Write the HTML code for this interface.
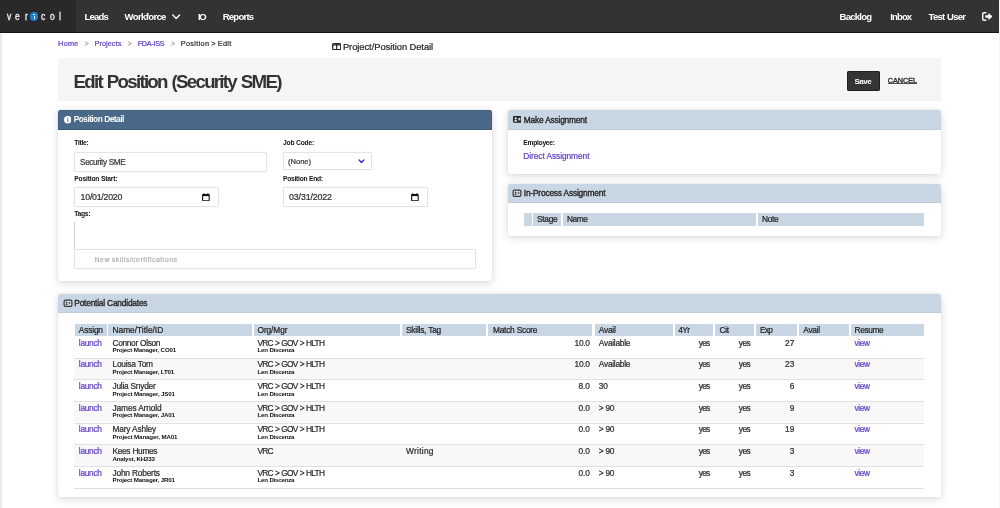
<!DOCTYPE html>
<html lang="en">
<head>
<meta charset="utf-8">
<title>Edit Position (Security SME)</title>
<style>
*{box-sizing:border-box;margin:0;padding:0}
html,body{width:1000px;height:508px;overflow:hidden;background:#fff}
body{position:relative;font-family:"Liberation Sans",sans-serif;color:#2b2b2b}
.b{position:absolute}
.t{position:absolute;white-space:pre;line-height:1em;font-family:"Liberation Sans",sans-serif;-webkit-text-stroke:.22px currentColor}
.txt{position:absolute;left:0;top:0;width:1000px;height:508px;filter:blur(.3px)}
.edgeL{left:0;top:33px;width:4px;height:475px;background:linear-gradient(90deg,#e4e4e4,#f6f6f6 50%,#fff)}
.edgeR{left:998.6px;top:0;width:1.4px;height:508px;background:linear-gradient(90deg,#fff,#ececec)}
.nav{left:0;top:0;width:998.5px;height:33px;background:#333;border-bottom:1.4px solid #161616}
.logo{left:0;top:0;width:75.7px;height:31.6px;background:#292929}
.logo span{position:absolute;top:12.2px;font-size:10.4px;line-height:1em;color:#f4f4f4;font-weight:400;-webkit-text-stroke:.3px #f4f4f4;transform:scaleX(.82);transform-origin:0 0}
.logo i{position:absolute;left:30px;top:12.4px;width:8.2px;height:8.2px;border-radius:50%;background:#1b7fd3}
.logo i:before{content:"";position:absolute;left:3.5px;top:3.4px;width:1.3px;height:3.5px;background:#fff}
.logo i:after{content:"";position:absolute;left:3.45px;top:1.3px;width:1.4px;height:1.4px;border-radius:50%;background:#fff}
.titlebar{left:58.3px;top:58px;width:882.8px;height:43.3px;background:#f5f5f5}
.save{left:846.6px;top:71.3px;width:33.1px;height:19.8px;background:#343434;border:1px solid #1c1c1c;border-radius:1.2px}
.cul{left:887.8px;top:83.3px;width:29.4px;height:.7px;background:#555}
.card{background:#fff;border-radius:2.5px;box-shadow:0 2px 8px rgba(0,0,0,.15),0 0 1.5px rgba(0,0,0,.10)}
.hd{border-radius:2.5px 2.5px 0 0;border-bottom:1px solid #c0cddb}
.in{background:#fff;border:1px solid #e3e3e3;border-radius:1.5px;box-shadow:0 0 1px rgba(0,0,0,.10)}
.th{background:#c9d6e3;height:12px}
.rl{left:74.4px;width:849.8px;height:1px;background:#e0e0e0}
.rz{left:74.4px;width:849.8px;height:20.7px;background:#f8f8f8}
</style>
</head>
<body>
<!-- page edges -->
<div class="b edgeL"></div>
<div class="b edgeR"></div>

<!-- top navigation -->
<div class="b nav"></div>
<div class="b logo">
  <span style="left:6.9px">v</span><span style="left:15.3px">e</span><span style="left:24.5px">r</span>
  <i></i>
  <span style="left:41.2px">c</span><span style="left:49.8px">o</span><span style="left:58.5px">l</span>
</div>
<svg class="b" style="left:172.4px;top:14.3px" width="8.4" height="5.8" viewBox="0 0 8.4 5.8"><path d="M0.8 1 L4.2 4.5 L7.6 1" fill="none" stroke="#fff" stroke-width="1.35" stroke-linecap="round" stroke-linejoin="round"/></svg>
<!-- sign-out icon -->
<svg class="b" style="left:981.6px;top:11.9px" width="10.6" height="9" viewBox="0 0 10.6 9">
  <path d="M3.9 0.7 H2.2 Q0.7 0.7 0.7 2.2 V6.8 Q0.7 8.3 2.2 8.3 H3.9" fill="none" stroke="#fff" stroke-width="1.4" stroke-linecap="round"/>
  <path d="M3.6 3.3 H6.4 V1.5 Q6.4 0.9 6.9 1.3 L10.2 4.2 Q10.5 4.5 10.2 4.8 L6.9 7.7 Q6.4 8.1 6.4 7.5 V5.7 H3.6 Q3.2 5.7 3.2 5.3 V3.7 Q3.2 3.3 3.6 3.3 Z" fill="#fff"/>
</svg>

<!-- project/position detail icon -->
<svg class="b" style="left:331.6px;top:43px" width="9.4" height="7.4" viewBox="0 0 9.4 7.4">
  <rect x="0.65" y="0.65" width="8.1" height="6.1" rx="1.2" fill="none" stroke="#262626" stroke-width="1.3"/>
  <path d="M4.7 0.8 V6.6 M0.8 1.8 H8.6" stroke="#262626" stroke-width="1.2"/>
</svg>

<!-- title bar -->
<div class="b titlebar"></div>
<div class="b save"></div>
<div class="b cul"></div>

<!-- Position Detail card -->
<div class="b card" style="left:58.2px;top:110px;width:433.6px;height:171.2px"></div>
<div class="b hd" style="left:58.2px;top:110px;width:433.6px;height:19.5px;background:#4a6888;border:1px solid #41607f;border-bottom:1px solid #3d5a78"></div>
<svg class="b" style="left:63.7px;top:116.1px" width="7.6" height="7.6" viewBox="0 0 7.6 7.6"><circle cx="3.8" cy="3.8" r="3.75" fill="#fff"/><rect x="3.3" y="3.3" width="1" height="2.6" fill="#4a6888"/><circle cx="3.8" cy="2.1" r=".65" fill="#4a6888"/></svg>
<div class="b in" style="left:74px;top:152px;width:193px;height:20px"></div>
<div class="b in" style="left:283px;top:152px;width:89px;height:18px"></div>
<svg class="b" style="left:357.6px;top:158.8px" width="7" height="4.8" viewBox="0 0 7 4.8"><path d="M1.1 1 L3.5 3.5 L5.9 1" fill="none" stroke="#4628c8" stroke-width="1.4" stroke-linecap="round" stroke-linejoin="round"/></svg>
<div class="b in" style="left:74px;top:187px;width:145px;height:20px"></div>
<div class="b in" style="left:283px;top:187px;width:145px;height:20px"></div>
<svg class="b cal" style="left:202.4px;top:192.9px" width="7.8" height="8.4" viewBox="0 0 7.8 8.4"><path d="M1.9 0.1 V1.5 M5.9 0.1 V1.5" stroke="#111" stroke-width="1"/><rect x="0.6" y="1.5" width="6.6" height="6.3" rx=".8" fill="none" stroke="#111" stroke-width="1.1"/><rect x="0.6" y="1.2" width="6.6" height="1.9" fill="#111"/></svg>
<svg class="b cal" style="left:410.8px;top:192.9px" width="7.8" height="8.4" viewBox="0 0 7.8 8.4"><path d="M1.9 0.1 V1.5 M5.9 0.1 V1.5" stroke="#111" stroke-width="1"/><rect x="0.6" y="1.5" width="6.6" height="6.3" rx=".8" fill="none" stroke="#111" stroke-width="1.1"/><rect x="0.6" y="1.2" width="6.6" height="1.9" fill="#111"/></svg>
<div class="b" style="left:74.3px;top:222.4px;width:1px;height:26.6px;background:#cfcfcf"></div>
<div class="b in" style="left:74px;top:249px;width:402px;height:20px"></div>

<!-- Make Assignment card -->
<div class="b card" style="left:508px;top:110px;width:433.2px;height:63.8px"></div>
<div class="b hd" style="left:508px;top:110px;width:433.2px;height:19.5px;background:#c9d6e3"></div>
<svg class="b" style="left:512.9px;top:116px" width="8.4" height="6.8" viewBox="0 0 8.4 6.8">
  <rect x="0" y="0" width="8.4" height="6.8" rx="1.1" fill="#222"/>
  <circle cx="2.7" cy="2.4" r="1.05" fill="#fff"/><path d="M1 5.5 Q1 3.9 2.7 3.9 Q4.4 3.9 4.4 5.5 Z" fill="#fff"/>
  <rect x="5.3" y="1.8" width="2.1" height="2.6" fill="#cfd6dd"/>
</svg>

<!-- In-Process Assignment card -->
<div class="b card" style="left:508px;top:183.7px;width:433.2px;height:51.9px"></div>
<div class="b hd" style="left:508px;top:183.7px;width:433.2px;height:19.4px;background:#c9d6e3"></div>
<svg class="b" style="left:512.2px;top:188.7px" width="10" height="8.5" viewBox="0 0 10 8.5">
  <rect x="1.1" y="1.1" width="7.8" height="6.3" rx="1.3" fill="#e3e9ef" stroke="#333" stroke-width="1.2"/>
  <circle cx="3.6" cy="3.4" r=".8" fill="#222"/><path d="M2.3 5.7 Q2.3 4.6 3.6 4.6 Q4.9 4.6 4.9 5.7 Z" fill="#222"/>
  <path d="M5.7 3.3 H7.4 M5.7 4.7 H7.4" stroke="#222" stroke-width=".8"/>
</svg>
<div class="b th" style="left:524.2px;top:213.3px;width:7.8px;height:12.3px"></div>
<div class="b th" style="left:533.3px;top:213.3px;width:28px;height:12.3px"></div>
<div class="b th" style="left:563px;top:213.3px;width:192.8px;height:12.3px"></div>
<div class="b th" style="left:758px;top:213.3px;width:166.2px;height:12.3px"></div>

<!-- Potential Candidates card -->
<div class="b card" style="left:58.2px;top:293.8px;width:883px;height:203.6px"></div>
<div class="b hd" style="left:58.2px;top:293.8px;width:883px;height:19.5px;background:#c9d6e3"></div>
<svg class="b" style="left:63px;top:299.1px" width="10" height="8.5" viewBox="0 0 10 8.5">
  <rect x="1.1" y="1.1" width="7.8" height="6.3" rx="1.3" fill="#e3e9ef" stroke="#333" stroke-width="1.2"/>
  <circle cx="3.6" cy="3.4" r=".8" fill="#222"/><path d="M2.3 5.7 Q2.3 4.6 3.6 4.6 Q4.9 4.6 4.9 5.7 Z" fill="#222"/>
  <path d="M5.7 3.3 H7.4 M5.7 4.7 H7.4" stroke="#222" stroke-width=".8"/>
</svg>
<!-- table head cells -->
<div class="b th" style="left:74.5px;top:323.5px;width:32px"></div>
<div class="b th" style="left:108.3px;top:323.5px;width:143.7px"></div>
<div class="b th" style="left:253.8px;top:323.5px;width:146.2px"></div>
<div class="b th" style="left:402px;top:323.5px;width:84.3px"></div>
<div class="b th" style="left:488.3px;top:323.5px;width:104.2px"></div>
<div class="b th" style="left:594.5px;top:323.5px;width:78px"></div>
<div class="b th" style="left:674.5px;top:323.5px;width:38.5px"></div>
<div class="b th" style="left:715px;top:323.5px;width:38.8px"></div>
<div class="b th" style="left:756.2px;top:323.5px;width:40.8px"></div>
<div class="b th" style="left:799.2px;top:323.5px;width:49.6px"></div>
<div class="b th" style="left:850.8px;top:323.5px;width:73.4px"></div>
<!-- zebra rows + row lines -->
<div class="b rz" style="top:358.5px"></div>
<div class="b rz" style="top:401.8px"></div>
<div class="b rz" style="top:445.2px"></div>
<div class="b rl" style="top:357.6px"></div>
<div class="b rl" style="top:379.3px"></div>
<div class="b rl" style="top:400.9px"></div>
<div class="b rl" style="top:422.6px"></div>
<div class="b rl" style="top:444.3px"></div>
<div class="b rl" style="top:465.9px"></div>
<div class="b rl" style="top:487.6px"></div>

<!-- all text -->
<div class="txt">
<span class="t" style="left:84.40px;top:11.96px;font-size:9.5px;letter-spacing:-0.792px;color:#ffffff;font-weight:700;-webkit-text-stroke:0;">Leads</span>
<span class="t" style="left:124.60px;top:11.96px;font-size:9.5px;letter-spacing:-0.627px;color:#ffffff;font-weight:700;-webkit-text-stroke:0;">Workforce</span>
<span class="t" style="left:198.00px;top:11.96px;font-size:9.5px;letter-spacing:-1.431px;color:#ffffff;font-weight:700;-webkit-text-stroke:0;">IO</span>
<span class="t" style="left:222.70px;top:11.96px;font-size:9.5px;letter-spacing:-0.751px;color:#ffffff;font-weight:700;-webkit-text-stroke:0;">Reports</span>
<span class="t" style="left:839.60px;top:11.96px;font-size:9.5px;letter-spacing:-0.761px;color:#ffffff;font-weight:700;-webkit-text-stroke:0;">Backlog</span>
<span class="t" style="left:890.30px;top:11.96px;font-size:9.5px;letter-spacing:-0.886px;color:#ffffff;font-weight:700;-webkit-text-stroke:0;">Inbox</span>
<span class="t" style="left:928.50px;top:11.96px;font-size:9.5px;letter-spacing:-0.703px;color:#ffffff;word-spacing:0.532px;font-weight:700;-webkit-text-stroke:0;">Test User</span>
<span class="t" style="left:58.10px;top:39.82px;font-size:7.3px;letter-spacing:0.277px;color:#6340d0;">Home</span>
<span class="t" style="left:84.80px;top:41.31px;font-size:6.6px;letter-spacing:-0.759px;color:#a0a0a0;">&gt;</span>
<span class="t" style="left:94.60px;top:39.82px;font-size:7.3px;letter-spacing:0.049px;color:#6340d0;">Projects</span>
<span class="t" style="left:127.80px;top:41.31px;font-size:6.6px;letter-spacing:-0.759px;color:#a0a0a0;">&gt;</span>
<span class="t" style="left:137.70px;top:39.82px;font-size:7.3px;letter-spacing:-0.299px;color:#6340d0;">FDA-ISS</span>
<span class="t" style="left:171.20px;top:41.31px;font-size:6.6px;letter-spacing:-0.659px;color:#a0a0a0;">&gt;</span>
<span class="t" style="left:180.80px;top:39.82px;font-size:7.3px;letter-spacing:0.325px;color:#333;word-spacing:-0.457px;">Position &gt; Edit</span>
<span class="t" style="left:342.90px;top:42.04px;font-size:9.4px;letter-spacing:-0.060px;color:#262626;word-spacing:-0.110px;">Project/Position Detail</span>
<span class="t" style="left:73.60px;top:72.77px;font-size:18.7px;letter-spacing:-1.728px;color:#333;word-spacing:1.391px;font-weight:700;-webkit-text-stroke:0;">Edit Position (Security SME)</span>
<span class="t" style="left:854.50px;top:77.83px;font-size:8.0px;letter-spacing:-0.463px;color:#fff;font-weight:700;-webkit-text-stroke:0;">Save</span>
<span class="t" style="left:887.80px;top:76.72px;font-size:7.3px;letter-spacing:-0.062px;color:#2a2a2a;-webkit-text-stroke-width:.35px;">CANCEL</span>
<span class="t" style="left:73.80px;top:115.25px;font-size:8.33px;letter-spacing:-0.561px;color:#fff;word-spacing:0.411px;font-weight:700;-webkit-text-stroke:0;">Position Detail</span>
<span class="t" style="left:74.30px;top:140.33px;font-size:6.7px;letter-spacing:-0.292px;color:#111;font-weight:700;-webkit-text-stroke:0;">Title:</span>
<span class="t" style="left:283.10px;top:140.33px;font-size:6.7px;letter-spacing:-0.212px;color:#111;word-spacing:0.091px;font-weight:700;-webkit-text-stroke:0;">Job Code:</span>
<span class="t" style="left:74.30px;top:175.63px;font-size:6.7px;letter-spacing:-0.183px;color:#111;word-spacing:0.063px;font-weight:700;-webkit-text-stroke:0;">Position Start:</span>
<span class="t" style="left:283.10px;top:175.63px;font-size:6.7px;letter-spacing:-0.279px;color:#111;word-spacing:0.159px;font-weight:700;-webkit-text-stroke:0;">Position End:</span>
<span class="t" style="left:74.30px;top:210.83px;font-size:6.7px;letter-spacing:-0.286px;color:#111;font-weight:700;-webkit-text-stroke:0;">Tags:</span>
<span class="t" style="left:80.10px;top:159.06px;font-size:8.2px;letter-spacing:-0.385px;color:#3a3a3a;word-spacing:0.237px;">Security SME</span>
<span class="t" style="left:288.10px;top:158.07px;font-size:7.6px;letter-spacing:-0.064px;color:#3a3a3a;">(None)</span>
<span class="t" style="left:80.60px;top:192.95px;font-size:8.8px;letter-spacing:-0.248px;color:#2e2e2e;">10/01/2020</span>
<span class="t" style="left:289.10px;top:192.95px;font-size:8.8px;letter-spacing:-0.137px;color:#2e2e2e;">03/31/2022</span>
<span class="t" style="left:94.60px;top:255.97px;font-size:7.0px;letter-spacing:0.459px;color:#b0b0b0;word-spacing:-0.585px;">New skills/certifications</span>
<span class="t" style="left:523.80px;top:115.65px;font-size:8.33px;letter-spacing:-0.183px;color:#262626;word-spacing:0.033px;-webkit-text-stroke-width:.35px;">Make Assignment</span>
<span class="t" style="left:523.30px;top:140.33px;font-size:6.7px;letter-spacing:-0.266px;color:#111;font-weight:700;-webkit-text-stroke:0;">Employee:</span>
<span class="t" style="left:523.30px;top:152.05px;font-size:8.33px;letter-spacing:-0.052px;color:#6340d0;word-spacing:-0.098px;">Direct Assignment</span>
<span class="t" style="left:523.80px;top:189.25px;font-size:8.33px;letter-spacing:-0.175px;color:#262626;word-spacing:0.025px;-webkit-text-stroke-width:.35px;">In-Process Assignment</span>
<span class="t" style="left:537.00px;top:214.95px;font-size:8.33px;letter-spacing:-0.266px;color:#222;">Stage</span>
<span class="t" style="left:567.00px;top:214.95px;font-size:8.33px;letter-spacing:-0.406px;color:#222;">Name</span>
<span class="t" style="left:762.00px;top:214.95px;font-size:8.33px;letter-spacing:-0.298px;color:#222;">Note</span>
<span class="t" style="left:74.30px;top:299.25px;font-size:8.33px;letter-spacing:-0.195px;color:#262626;word-spacing:0.045px;-webkit-text-stroke-width:.35px;">Potential Candidates</span>
<span class="t" style="left:78.80px;top:325.75px;font-size:8.33px;letter-spacing:-0.160px;color:#222;">Assign</span>
<span class="t" style="left:112.50px;top:325.75px;font-size:8.33px;letter-spacing:0.008px;color:#222;">Name/Title/ID</span>
<span class="t" style="left:257.50px;top:325.75px;font-size:8.33px;letter-spacing:-0.091px;color:#222;">Org/Mgr</span>
<span class="t" style="left:406.00px;top:325.75px;font-size:8.33px;letter-spacing:-0.222px;color:#222;word-spacing:0.072px;">Skills, Tag</span>
<span class="t" style="left:493.00px;top:325.75px;font-size:8.33px;letter-spacing:-0.233px;color:#222;word-spacing:0.083px;">Match Score</span>
<span class="t" style="left:598.80px;top:325.75px;font-size:8.33px;letter-spacing:-0.227px;color:#222;">Avail</span>
<span class="t" style="left:678.30px;top:325.75px;font-size:8.33px;letter-spacing:-0.634px;color:#222;">4Yr</span>
<span class="t" style="left:719.50px;top:325.75px;font-size:8.33px;letter-spacing:-0.344px;color:#222;">Cit</span>
<span class="t" style="left:760.00px;top:325.75px;font-size:8.33px;letter-spacing:-0.680px;color:#222;">Exp</span>
<span class="t" style="left:803.30px;top:325.75px;font-size:8.33px;letter-spacing:-0.302px;color:#222;">Avail</span>
<span class="t" style="left:854.50px;top:325.75px;font-size:8.33px;letter-spacing:-0.363px;color:#222;">Resume</span>
<span class="t" style="left:78.80px;top:338.68px;font-size:8.33px;letter-spacing:-0.269px;color:#6340d0;">launch</span>
<span class="t" style="left:112.50px;top:338.68px;font-size:8.33px;letter-spacing:-0.324px;color:#2b2b2b;word-spacing:0.174px;">Connor Olson</span>
<span class="t" style="left:112.50px;top:347.48px;font-size:6.2px;letter-spacing:-0.194px;color:#111;word-spacing:0.082px;font-weight:700;-webkit-text-stroke:0;">Project Manager, CO01</span>
<span class="t" style="left:257.50px;top:338.68px;font-size:8.33px;letter-spacing:-0.738px;color:#2b2b2b;word-spacing:0.588px;">VRC &gt; GOV &gt; HLTH</span>
<span class="t" style="left:257.50px;top:347.48px;font-size:6.2px;letter-spacing:-0.244px;color:#111;word-spacing:0.132px;font-weight:700;-webkit-text-stroke:0;">Len Discenza</span>
<span class="t" style="left:574.50px;top:338.68px;font-size:8.33px;letter-spacing:-0.240px;color:#2b2b2b;">10.0</span>
<span class="t" style="left:598.80px;top:338.68px;font-size:8.33px;letter-spacing:-0.245px;color:#2b2b2b;">Available</span>
<span class="t" style="left:698.80px;top:338.68px;font-size:8.33px;letter-spacing:-0.734px;color:#2b2b2b;">yes</span>
<span class="t" style="left:738.80px;top:338.68px;font-size:8.33px;letter-spacing:-0.484px;color:#2b2b2b;">yes</span>
<span class="t" style="left:785.10px;top:338.68px;font-size:8.33px;letter-spacing:-0.066px;color:#2b2b2b;">27</span>
<span class="t" style="left:854.50px;top:338.68px;font-size:8.33px;letter-spacing:-0.391px;color:#6340d0;">view</span>
<span class="t" style="left:78.80px;top:360.35px;font-size:8.33px;letter-spacing:-0.269px;color:#6340d0;">launch</span>
<span class="t" style="left:112.50px;top:360.35px;font-size:8.33px;letter-spacing:-0.223px;color:#2b2b2b;word-spacing:0.074px;">Louisa Tom</span>
<span class="t" style="left:112.50px;top:369.15px;font-size:6.2px;letter-spacing:-0.183px;color:#111;word-spacing:0.071px;font-weight:700;-webkit-text-stroke:0;">Project Manager, LT01</span>
<span class="t" style="left:257.50px;top:360.35px;font-size:8.33px;letter-spacing:-0.738px;color:#2b2b2b;word-spacing:0.588px;">VRC &gt; GOV &gt; HLTH</span>
<span class="t" style="left:257.50px;top:369.15px;font-size:6.2px;letter-spacing:-0.244px;color:#111;word-spacing:0.132px;font-weight:700;-webkit-text-stroke:0;">Len Discenza</span>
<span class="t" style="left:574.50px;top:360.35px;font-size:8.33px;letter-spacing:-0.240px;color:#2b2b2b;">10.0</span>
<span class="t" style="left:598.80px;top:360.35px;font-size:8.33px;letter-spacing:-0.245px;color:#2b2b2b;">Available</span>
<span class="t" style="left:698.80px;top:360.35px;font-size:8.33px;letter-spacing:-0.734px;color:#2b2b2b;">yes</span>
<span class="t" style="left:738.80px;top:360.35px;font-size:8.33px;letter-spacing:-0.484px;color:#2b2b2b;">yes</span>
<span class="t" style="left:785.10px;top:360.35px;font-size:8.33px;letter-spacing:-0.066px;color:#2b2b2b;">23</span>
<span class="t" style="left:854.50px;top:360.35px;font-size:8.33px;letter-spacing:-0.391px;color:#6340d0;">view</span>
<span class="t" style="left:78.80px;top:382.01px;font-size:8.33px;letter-spacing:-0.269px;color:#6340d0;">launch</span>
<span class="t" style="left:112.50px;top:382.01px;font-size:8.33px;letter-spacing:-0.249px;color:#2b2b2b;word-spacing:0.099px;">Julia Snyder</span>
<span class="t" style="left:112.50px;top:390.82px;font-size:6.2px;letter-spacing:-0.165px;color:#111;word-spacing:0.053px;font-weight:700;-webkit-text-stroke:0;">Project Manager, JS01</span>
<span class="t" style="left:257.50px;top:382.01px;font-size:8.33px;letter-spacing:-0.738px;color:#2b2b2b;word-spacing:0.588px;">VRC &gt; GOV &gt; HLTH</span>
<span class="t" style="left:257.50px;top:390.82px;font-size:6.2px;letter-spacing:-0.244px;color:#111;word-spacing:0.132px;font-weight:700;-webkit-text-stroke:0;">Len Discenza</span>
<span class="t" style="left:578.50px;top:382.01px;font-size:8.33px;letter-spacing:-0.039px;color:#2b2b2b;">8.0</span>
<span class="t" style="left:598.80px;top:382.01px;font-size:8.33px;letter-spacing:-0.166px;color:#2b2b2b;">30</span>
<span class="t" style="left:698.80px;top:382.01px;font-size:8.33px;letter-spacing:-0.734px;color:#2b2b2b;">yes</span>
<span class="t" style="left:738.80px;top:382.01px;font-size:8.33px;letter-spacing:-0.484px;color:#2b2b2b;">yes</span>
<span class="t" style="left:789.70px;top:382.01px;font-size:8.33px;letter-spacing:-0.041px;color:#2b2b2b;">6</span>
<span class="t" style="left:854.50px;top:382.01px;font-size:8.33px;letter-spacing:-0.391px;color:#6340d0;">view</span>
<span class="t" style="left:78.80px;top:403.68px;font-size:8.33px;letter-spacing:-0.269px;color:#6340d0;">launch</span>
<span class="t" style="left:112.50px;top:403.68px;font-size:8.33px;letter-spacing:-0.112px;color:#2b2b2b;word-spacing:-0.038px;">James Arnold</span>
<span class="t" style="left:112.50px;top:412.48px;font-size:6.2px;letter-spacing:-0.184px;color:#111;word-spacing:0.072px;font-weight:700;-webkit-text-stroke:0;">Project Manager, JA01</span>
<span class="t" style="left:257.50px;top:403.68px;font-size:8.33px;letter-spacing:-0.738px;color:#2b2b2b;word-spacing:0.588px;">VRC &gt; GOV &gt; HLTH</span>
<span class="t" style="left:257.50px;top:412.48px;font-size:6.2px;letter-spacing:-0.244px;color:#111;word-spacing:0.132px;font-weight:700;-webkit-text-stroke:0;">Len Discenza</span>
<span class="t" style="left:578.50px;top:403.68px;font-size:8.33px;letter-spacing:-0.039px;color:#2b2b2b;">0.0</span>
<span class="t" style="left:598.80px;top:403.68px;font-size:8.33px;letter-spacing:-0.402px;color:#2b2b2b;word-spacing:0.252px;">&gt; 90</span>
<span class="t" style="left:698.80px;top:403.68px;font-size:8.33px;letter-spacing:-0.734px;color:#2b2b2b;">yes</span>
<span class="t" style="left:738.80px;top:403.68px;font-size:8.33px;letter-spacing:-0.484px;color:#2b2b2b;">yes</span>
<span class="t" style="left:789.70px;top:403.68px;font-size:8.33px;letter-spacing:-0.041px;color:#2b2b2b;">9</span>
<span class="t" style="left:854.50px;top:403.68px;font-size:8.33px;letter-spacing:-0.391px;color:#6340d0;">view</span>
<span class="t" style="left:78.80px;top:425.35px;font-size:8.33px;letter-spacing:-0.269px;color:#6340d0;">launch</span>
<span class="t" style="left:112.50px;top:425.35px;font-size:8.33px;letter-spacing:-0.168px;color:#2b2b2b;word-spacing:0.018px;">Mary Ashley</span>
<span class="t" style="left:112.50px;top:434.15px;font-size:6.2px;letter-spacing:-0.140px;color:#111;word-spacing:0.029px;font-weight:700;-webkit-text-stroke:0;">Project Manager, MA01</span>
<span class="t" style="left:257.50px;top:425.35px;font-size:8.33px;letter-spacing:-0.738px;color:#2b2b2b;word-spacing:0.588px;">VRC &gt; GOV &gt; HLTH</span>
<span class="t" style="left:257.50px;top:434.15px;font-size:6.2px;letter-spacing:-0.244px;color:#111;word-spacing:0.132px;font-weight:700;-webkit-text-stroke:0;">Len Discenza</span>
<span class="t" style="left:578.50px;top:425.35px;font-size:8.33px;letter-spacing:-0.039px;color:#2b2b2b;">0.0</span>
<span class="t" style="left:598.80px;top:425.35px;font-size:8.33px;letter-spacing:-0.402px;color:#2b2b2b;word-spacing:0.252px;">&gt; 90</span>
<span class="t" style="left:698.80px;top:425.35px;font-size:8.33px;letter-spacing:-0.734px;color:#2b2b2b;">yes</span>
<span class="t" style="left:738.80px;top:425.35px;font-size:8.33px;letter-spacing:-0.484px;color:#2b2b2b;">yes</span>
<span class="t" style="left:785.10px;top:425.35px;font-size:8.33px;letter-spacing:-0.066px;color:#2b2b2b;">19</span>
<span class="t" style="left:854.50px;top:425.35px;font-size:8.33px;letter-spacing:-0.391px;color:#6340d0;">view</span>
<span class="t" style="left:78.80px;top:447.01px;font-size:8.33px;letter-spacing:-0.269px;color:#6340d0;">launch</span>
<span class="t" style="left:112.50px;top:447.01px;font-size:8.33px;letter-spacing:-0.317px;color:#2b2b2b;word-spacing:0.167px;">Kees Humes</span>
<span class="t" style="left:112.50px;top:455.82px;font-size:6.2px;letter-spacing:-0.204px;color:#111;word-spacing:0.093px;font-weight:700;-webkit-text-stroke:0;">Analyst, KH233</span>
<span class="t" style="left:257.50px;top:447.01px;font-size:8.33px;letter-spacing:-0.797px;color:#2b2b2b;">VRC</span>
<span class="t" style="left:406.00px;top:447.01px;font-size:8.33px;letter-spacing:0.289px;color:#2b2b2b;">Writing</span>
<span class="t" style="left:578.50px;top:447.01px;font-size:8.33px;letter-spacing:-0.039px;color:#2b2b2b;">0.0</span>
<span class="t" style="left:598.80px;top:447.01px;font-size:8.33px;letter-spacing:-0.402px;color:#2b2b2b;word-spacing:0.252px;">&gt; 90</span>
<span class="t" style="left:698.80px;top:447.01px;font-size:8.33px;letter-spacing:-0.734px;color:#2b2b2b;">yes</span>
<span class="t" style="left:738.80px;top:447.01px;font-size:8.33px;letter-spacing:-0.484px;color:#2b2b2b;">yes</span>
<span class="t" style="left:789.70px;top:447.01px;font-size:8.33px;letter-spacing:-0.041px;color:#2b2b2b;">3</span>
<span class="t" style="left:854.50px;top:447.01px;font-size:8.33px;letter-spacing:-0.391px;color:#6340d0;">view</span>
<span class="t" style="left:78.80px;top:468.68px;font-size:8.33px;letter-spacing:-0.269px;color:#6340d0;">launch</span>
<span class="t" style="left:112.50px;top:468.68px;font-size:8.33px;letter-spacing:-0.190px;color:#2b2b2b;word-spacing:0.040px;">John Roberts</span>
<span class="t" style="left:112.50px;top:477.48px;font-size:6.2px;letter-spacing:-0.184px;color:#111;word-spacing:0.072px;font-weight:700;-webkit-text-stroke:0;">Project Manager, JR01</span>
<span class="t" style="left:257.50px;top:468.68px;font-size:8.33px;letter-spacing:-0.738px;color:#2b2b2b;word-spacing:0.588px;">VRC &gt; GOV &gt; HLTH</span>
<span class="t" style="left:257.50px;top:477.48px;font-size:6.2px;letter-spacing:-0.244px;color:#111;word-spacing:0.132px;font-weight:700;-webkit-text-stroke:0;">Len Discenza</span>
<span class="t" style="left:578.50px;top:468.68px;font-size:8.33px;letter-spacing:-0.039px;color:#2b2b2b;">0.0</span>
<span class="t" style="left:598.80px;top:468.68px;font-size:8.33px;letter-spacing:-0.402px;color:#2b2b2b;word-spacing:0.252px;">&gt; 90</span>
<span class="t" style="left:698.80px;top:468.68px;font-size:8.33px;letter-spacing:-0.734px;color:#2b2b2b;">yes</span>
<span class="t" style="left:738.80px;top:468.68px;font-size:8.33px;letter-spacing:-0.484px;color:#2b2b2b;">yes</span>
<span class="t" style="left:789.70px;top:468.68px;font-size:8.33px;letter-spacing:-0.041px;color:#2b2b2b;">3</span>
<span class="t" style="left:854.50px;top:468.68px;font-size:8.33px;letter-spacing:-0.391px;color:#6340d0;">view</span>
</div>
</body>
</html>
